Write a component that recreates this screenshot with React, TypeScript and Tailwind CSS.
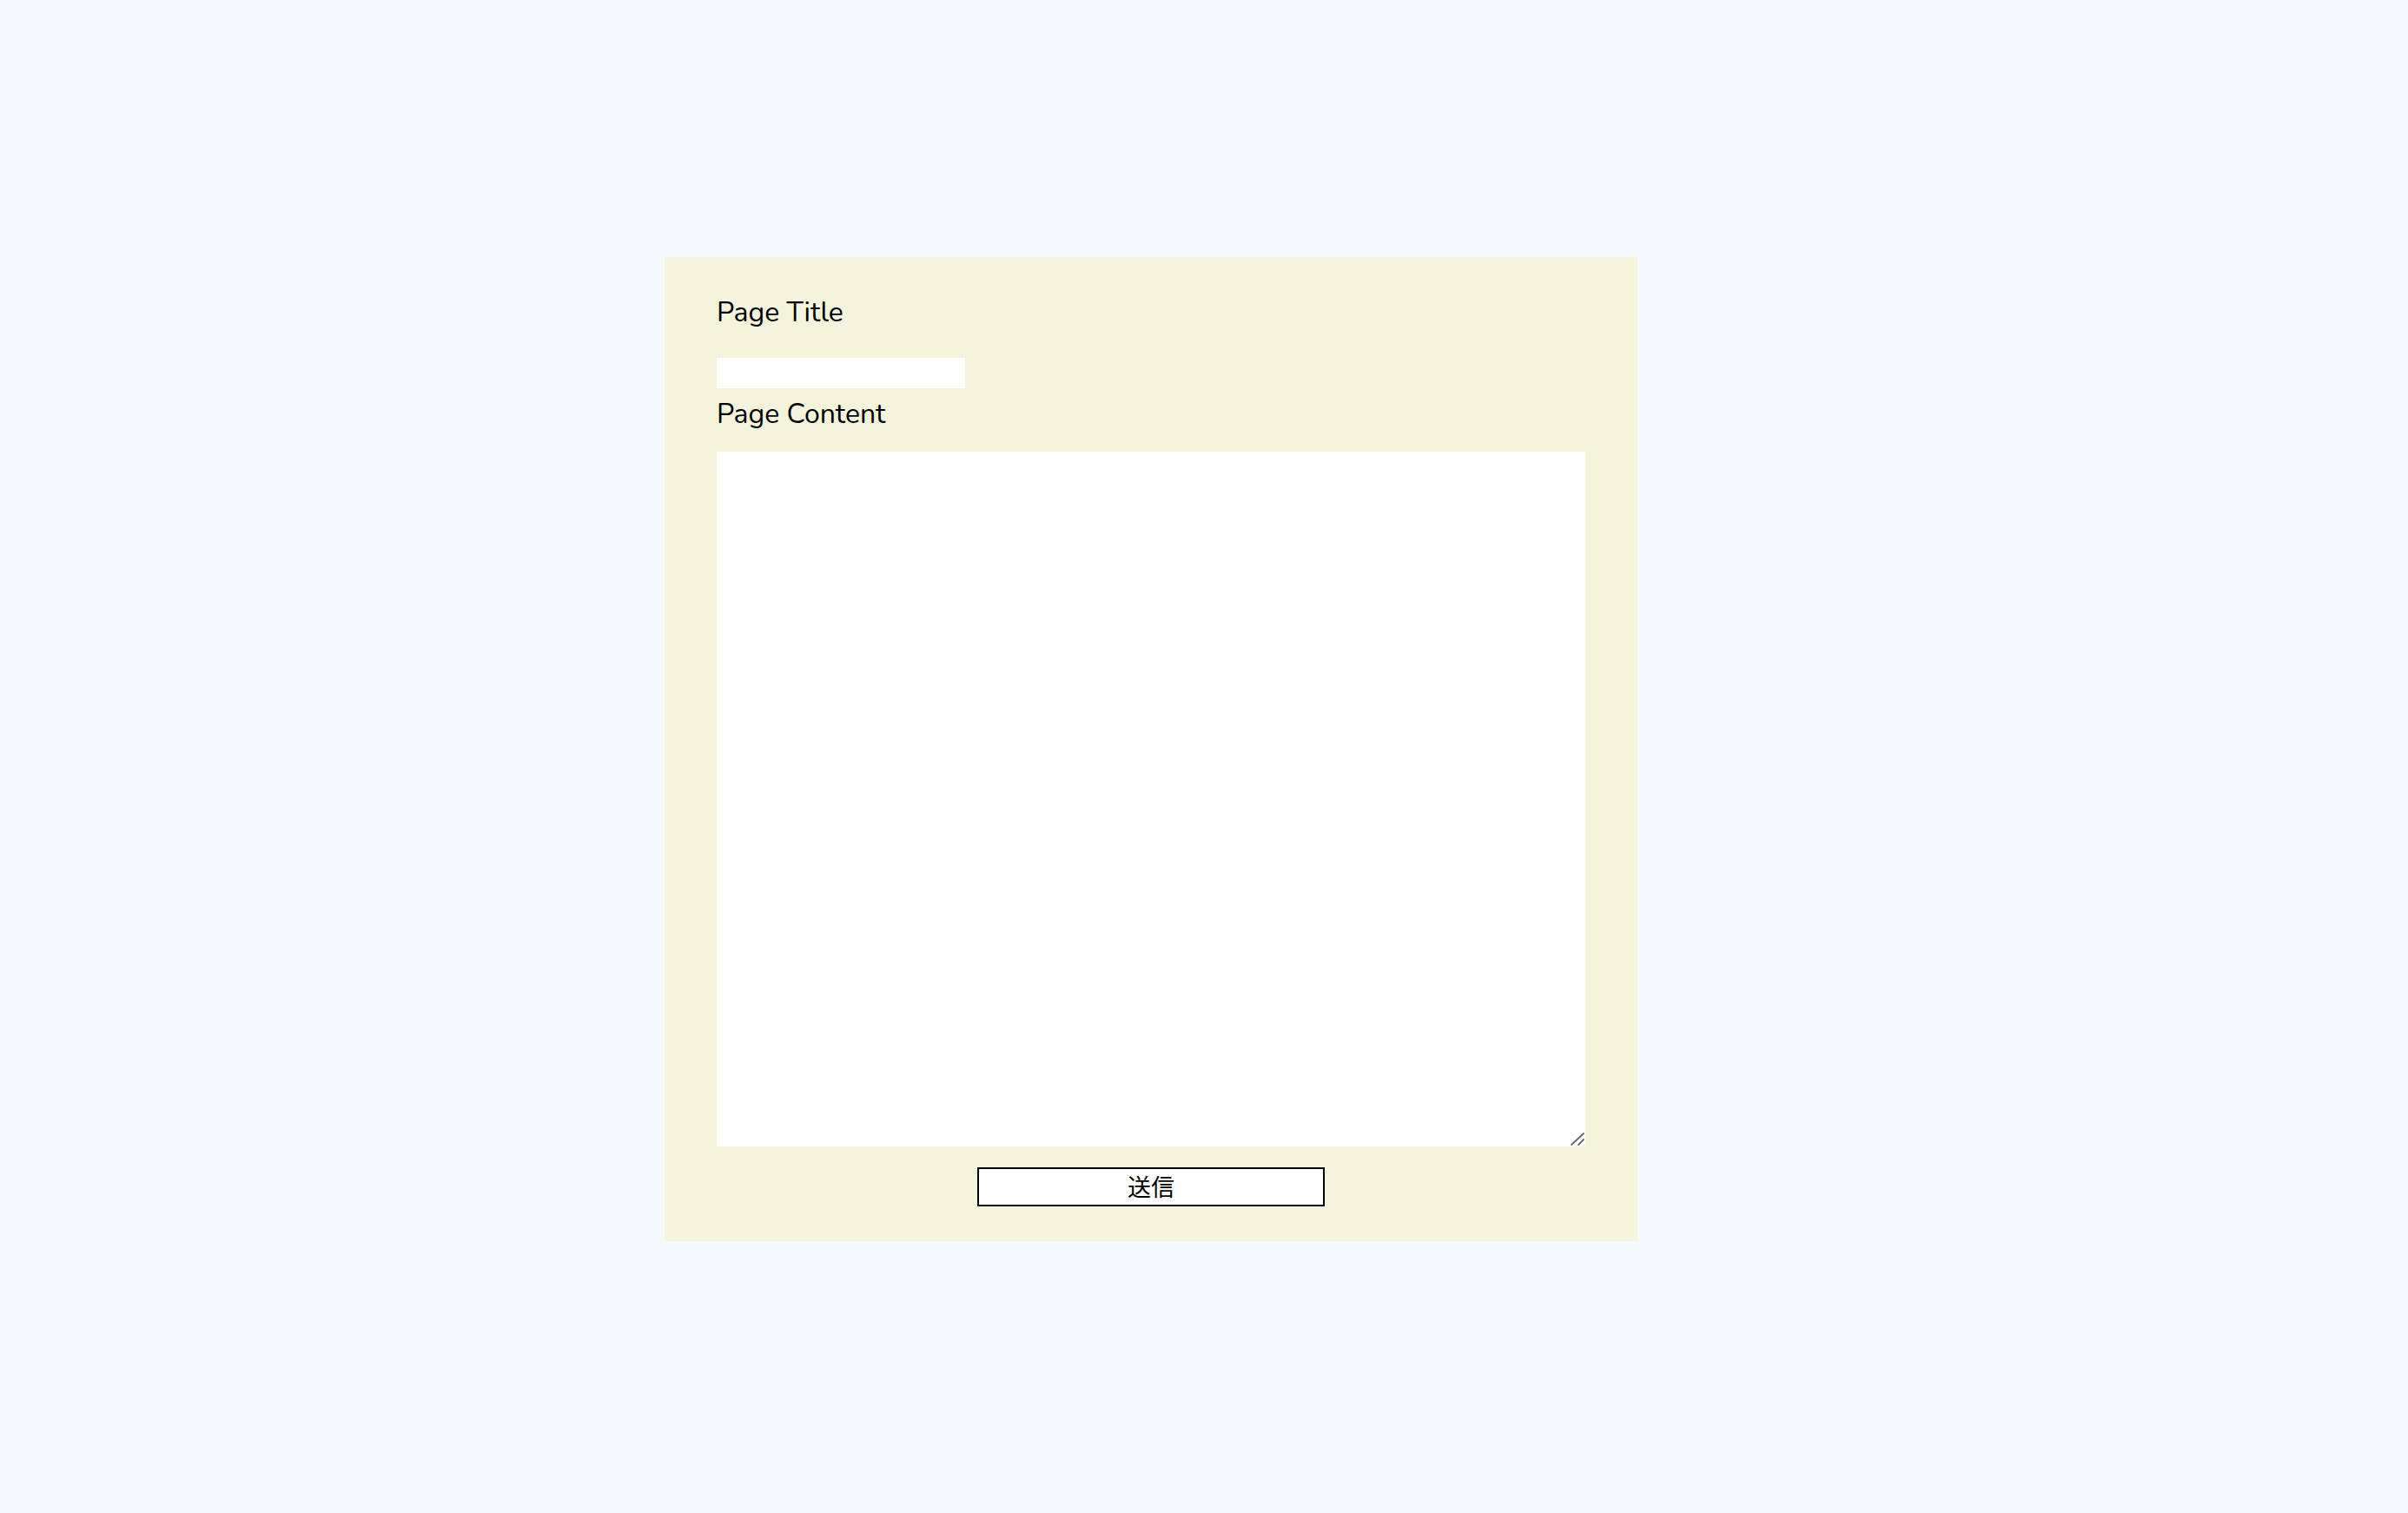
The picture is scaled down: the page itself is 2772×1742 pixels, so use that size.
export default function App() {
  return (
    <div className="min-h-screen w-full bg-[#f5f9fc] pt-[296px] pl-[765px]" style={{ fontFamily: 'Nunito, Lato, "Noto Sans", sans-serif' }}>
      <form className="w-[1120px] bg-[#f4f4dc] px-[60px] pt-[40px] pb-[40px] flex flex-col" onSubmit={(e) => e.preventDefault()}>
        <label className="text-[32px] leading-normal text-black">Page Title</label>
        <input type="text" className="mt-[28px] h-[35px] w-[286px] bg-white outline-none border-0" />
        <label className="mt-[6px] text-[32px] leading-normal text-black">Page Content</label>
        <div className="relative mt-[19px] h-[800px] w-[1000px]">
          <textarea className="block h-full w-full bg-white outline-none border-0 resize-none" />
          <svg className="pointer-events-none absolute right-0 bottom-0" width="20" height="20" viewBox="0 0 20 20">
            <line x1="4" y1="18" x2="18" y2="5" stroke="#666" strokeWidth="1.8" strokeLinecap="round" />
            <line x1="12" y1="18" x2="18" y2="12" stroke="#666" strokeWidth="1.8" strokeLinecap="round" />
          </svg>
        </div>
        <div className="mt-[24px] flex justify-center">
          <button type="submit" className="h-[45px] w-[400px] border-2 border-black bg-white pb-[2px] text-[27px] leading-none text-black" style={{ fontFamily: '"Noto Sans CJK JP", sans-serif' }}>
            送信
          </button>
        </div>
      </form>
    </div>
  );
}
